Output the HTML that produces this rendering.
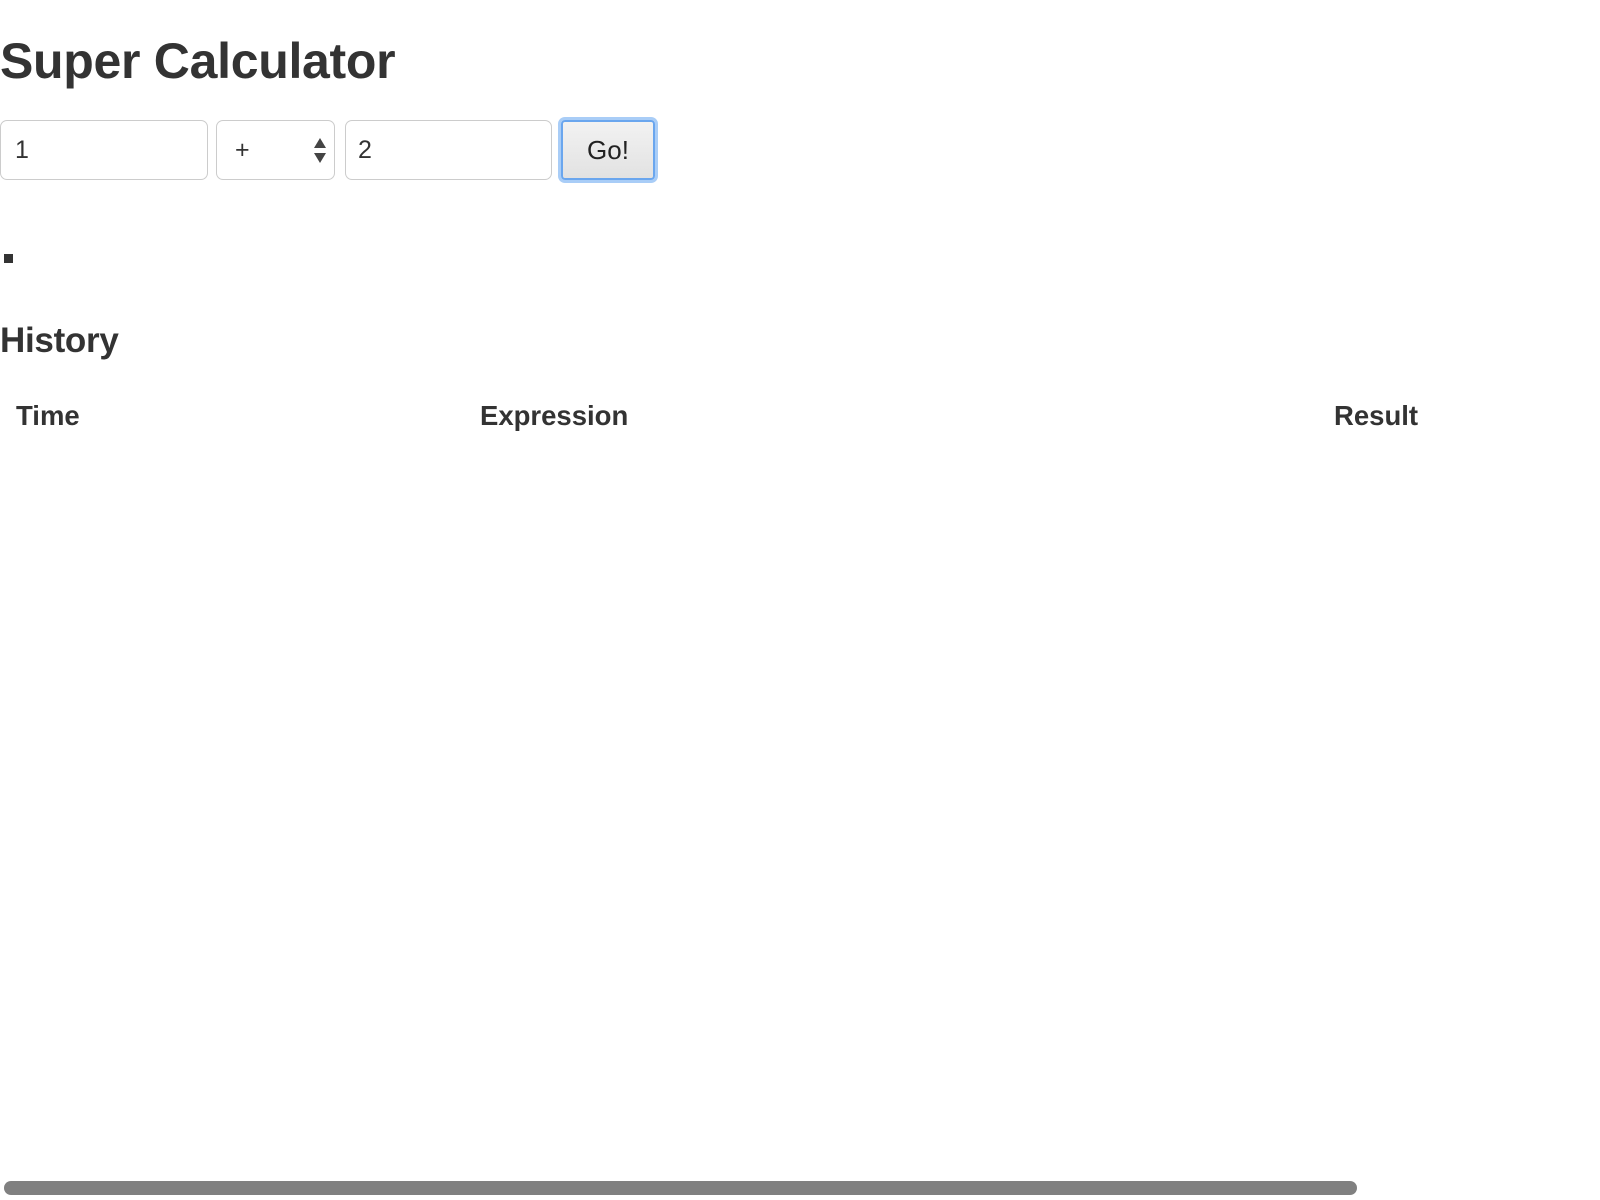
<!DOCTYPE html>
<html><head><meta charset="utf-8"><style>
html,body{margin:0;padding:0;background:#fff;width:1600px;height:1200px;overflow:hidden;position:relative;font-family:"Liberation Sans",Arial,sans-serif;color:#333}
.a{position:absolute}
h1{position:absolute;left:0;top:31px;margin:0;font-size:50px;font-weight:bold;letter-spacing:-0.3px;line-height:60px;white-space:nowrap}
.box{position:absolute;top:120px;border:1px solid #ccc;border-radius:7px;box-sizing:border-box;height:60px;background:#fff;font-size:25px;line-height:58px;color:#333}
.btn{position:absolute;left:561px;top:120px;width:94px;height:60px;box-sizing:border-box;border:2px solid #6aa6ee;border-radius:4px;box-shadow:0 0 0 3px #a9cdf7;background:linear-gradient(#f2f2f2,#e2e2e2);font-size:26px;line-height:56px;text-align:center;color:#222}
.th{position:absolute;top:400px;font-size:27.5px;font-weight:bold;line-height:32px}
</style></head><body>
<h1>Super Calculator</h1>
<div class="box" style="left:0;width:208px;padding-left:14px">1</div>
<div class="box" style="left:216px;width:119px;padding-left:18px">+
<svg class="a" style="left:96px;top:16px" width="14" height="28" viewBox="0 0 14 28"><path d="M7 1 L13 11 L1 11 Z M1 16 L13 16 L7 26 Z" fill="#444"/></svg></div>
<div class="box" style="left:345px;width:207px;padding-left:12px">2</div>
<div class="btn">Go!</div>
<div class="a" style="left:4px;top:254px;width:9px;height:9px;background:#333"></div>
<div class="a" style="left:0;top:321px;font-size:35px;font-weight:bold;line-height:40px;letter-spacing:-0.3px">History</div>
<div class="th" style="left:16px">Time</div>
<div class="th" style="left:480px">Expression</div>
<div class="th" style="left:1334px">Result</div>
<div class="a" style="left:4px;top:1181px;width:1353px;height:14px;border-radius:7px;background:#808080"></div>
</body></html>
